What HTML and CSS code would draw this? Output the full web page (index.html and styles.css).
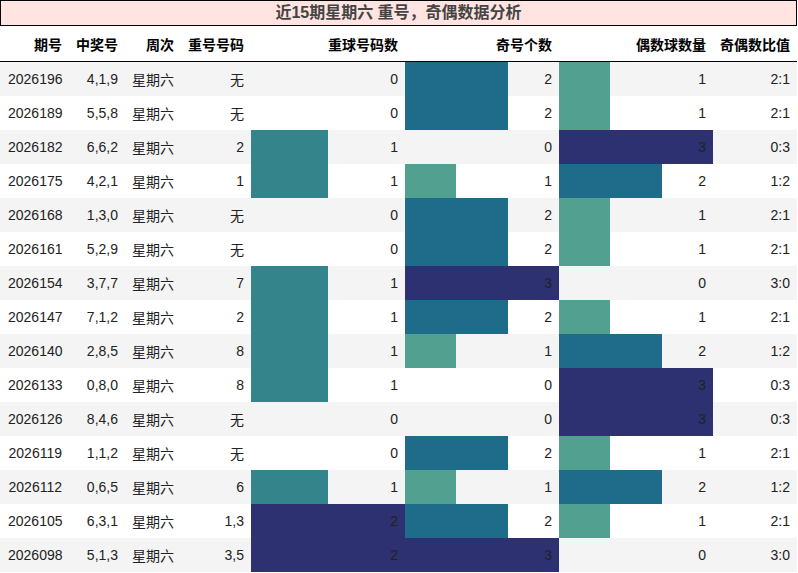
FILE: index.html
```html
<!DOCTYPE html>
<html lang="zh">
<head>
<meta charset="utf-8">
<title>近15期星期六 重号，奇偶数据分析</title>
<link rel="stylesheet" href="styles.css">
</head>
<body>
<table class="stats">
  <caption class="title">近15期星期六 重号，奇偶数据分析</caption>
  <colgroup>
    <col class="c-issue"><col class="c-num"><col class="c-week"><col class="c-rep">
    <col class="c-bar"><col class="c-bar"><col class="c-bar"><col class="c-ratio">
  </colgroup>
  <thead>
    <tr><th>期号</th><th>中奖号</th><th>周次</th><th>重号号码</th><th>重球号码数</th><th>奇号个数</th><th>偶数球数量</th><th>奇偶数比值</th></tr>
  </thead>
  <tbody>
    <tr><td>2026196</td><td>4,1,9</td><td>星期六</td><td>无</td><td>0</td><td style="background:linear-gradient(90deg,#1f6b8a 66.67%,transparent 66.67%)">2</td><td style="background:linear-gradient(90deg,#52a08f 33.33%,transparent 33.33%)">1</td><td>2:1</td></tr>
    <tr><td>2026189</td><td>5,5,8</td><td>星期六</td><td>无</td><td>0</td><td style="background:linear-gradient(90deg,#1f6b8a 66.67%,transparent 66.67%)">2</td><td style="background:linear-gradient(90deg,#52a08f 33.33%,transparent 33.33%)">1</td><td>2:1</td></tr>
    <tr><td>2026182</td><td>6,6,2</td><td>星期六</td><td>2</td><td style="background:linear-gradient(90deg,#34858b 50%,transparent 50%)">1</td><td>0</td><td style="background:linear-gradient(90deg,#2d3171 100%,transparent 100%)">3</td><td>0:3</td></tr>
    <tr><td>2026175</td><td>4,2,1</td><td>星期六</td><td>1</td><td style="background:linear-gradient(90deg,#34858b 50%,transparent 50%)">1</td><td style="background:linear-gradient(90deg,#52a08f 33.33%,transparent 33.33%)">1</td><td style="background:linear-gradient(90deg,#1f6b8a 66.67%,transparent 66.67%)">2</td><td>1:2</td></tr>
    <tr><td>2026168</td><td>1,3,0</td><td>星期六</td><td>无</td><td>0</td><td style="background:linear-gradient(90deg,#1f6b8a 66.67%,transparent 66.67%)">2</td><td style="background:linear-gradient(90deg,#52a08f 33.33%,transparent 33.33%)">1</td><td>2:1</td></tr>
    <tr><td>2026161</td><td>5,2,9</td><td>星期六</td><td>无</td><td>0</td><td style="background:linear-gradient(90deg,#1f6b8a 66.67%,transparent 66.67%)">2</td><td style="background:linear-gradient(90deg,#52a08f 33.33%,transparent 33.33%)">1</td><td>2:1</td></tr>
    <tr><td>2026154</td><td>3,7,7</td><td>星期六</td><td>7</td><td style="background:linear-gradient(90deg,#34858b 50%,transparent 50%)">1</td><td style="background:linear-gradient(90deg,#2d3171 100%,transparent 100%)">3</td><td>0</td><td>3:0</td></tr>
    <tr><td>2026147</td><td>7,1,2</td><td>星期六</td><td>2</td><td style="background:linear-gradient(90deg,#34858b 50%,transparent 50%)">1</td><td style="background:linear-gradient(90deg,#1f6b8a 66.67%,transparent 66.67%)">2</td><td style="background:linear-gradient(90deg,#52a08f 33.33%,transparent 33.33%)">1</td><td>2:1</td></tr>
    <tr><td>2026140</td><td>2,8,5</td><td>星期六</td><td>8</td><td style="background:linear-gradient(90deg,#34858b 50%,transparent 50%)">1</td><td style="background:linear-gradient(90deg,#52a08f 33.33%,transparent 33.33%)">1</td><td style="background:linear-gradient(90deg,#1f6b8a 66.67%,transparent 66.67%)">2</td><td>1:2</td></tr>
    <tr><td>2026133</td><td>0,8,0</td><td>星期六</td><td>8</td><td style="background:linear-gradient(90deg,#34858b 50%,transparent 50%)">1</td><td>0</td><td style="background:linear-gradient(90deg,#2d3171 100%,transparent 100%)">3</td><td>0:3</td></tr>
    <tr><td>2026126</td><td>8,4,6</td><td>星期六</td><td>无</td><td>0</td><td>0</td><td style="background:linear-gradient(90deg,#2d3171 100%,transparent 100%)">3</td><td>0:3</td></tr>
    <tr><td>2026119</td><td>1,1,2</td><td>星期六</td><td>无</td><td>0</td><td style="background:linear-gradient(90deg,#1f6b8a 66.67%,transparent 66.67%)">2</td><td style="background:linear-gradient(90deg,#52a08f 33.33%,transparent 33.33%)">1</td><td>2:1</td></tr>
    <tr><td>2026112</td><td>0,6,5</td><td>星期六</td><td>6</td><td style="background:linear-gradient(90deg,#34858b 50%,transparent 50%)">1</td><td style="background:linear-gradient(90deg,#52a08f 33.33%,transparent 33.33%)">1</td><td style="background:linear-gradient(90deg,#1f6b8a 66.67%,transparent 66.67%)">2</td><td>1:2</td></tr>
    <tr><td>2026105</td><td>6,3,1</td><td>星期六</td><td>1,3</td><td style="background:linear-gradient(90deg,#2d3171 100%,transparent 100%)">2</td><td style="background:linear-gradient(90deg,#1f6b8a 66.67%,transparent 66.67%)">2</td><td style="background:linear-gradient(90deg,#52a08f 33.33%,transparent 33.33%)">1</td><td>2:1</td></tr>
    <tr><td>2026098</td><td>5,1,3</td><td>星期六</td><td>3,5</td><td style="background:linear-gradient(90deg,#2d3171 100%,transparent 100%)">2</td><td style="background:linear-gradient(90deg,#2d3171 100%,transparent 100%)">3</td><td>0</td><td>3:0</td></tr>
  </tbody>
</table>
</body>
</html>
```

FILE: styles.css
```css
html, body {
  margin: 0;
  padding: 0;
  background: #ffffff;
}

.stats {
  border-collapse: collapse;
  table-layout: fixed;
  width: 797px;
  font-family: "Liberation Sans", "Noto Sans CJK SC", sans-serif;
  font-size: 14px;
  color: #222222;
}

.title {
  background: #ffe4e1;
  border: 1px solid #000000;
  color: #444444;
  font-size: 16px;
  font-weight: bold;
  line-height: 24px;
  text-align: center;
}

.c-issue { width: 69px; }
.c-num { width: 56px; }
.c-week { width: 56px; }
.c-rep { width: 70px; }
.c-bar { width: 154px; }
.c-ratio { width: 84px; }

.stats th,
.stats td {
  padding: 0 7px;
  height: 34px;
  text-align: right;
  vertical-align: middle;
  white-space: nowrap;
}

.stats th:first-child,
.stats td:first-child {
  padding-left: 8px;
}

.stats thead th {
  height: 35px;
  font-weight: bold;
  color: #000000;
  border-bottom: 1px solid #000000;
}

.stats tbody tr:nth-child(odd) {
  background-color: #f4f4f4;
}

.stats tbody tr:nth-child(even) {
  background-color: #ffffff;
}
```
